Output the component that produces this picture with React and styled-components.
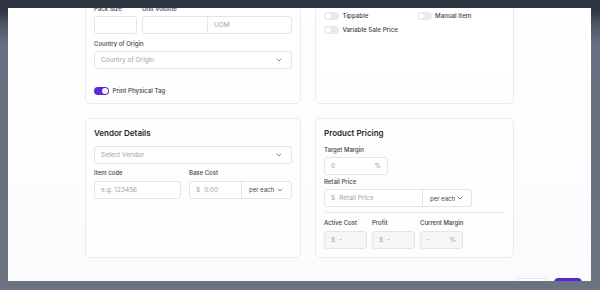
import { useLayoutEffect, useRef } from "react";
import styled, { createGlobalStyle } from "styled-components";
import { ChevronDown } from "lucide-react";

const GlobalStyle = createGlobalStyle`
  * { box-sizing: border-box; }
  html, body { margin: 0; height: 100%; }
  body {
    font-family: Inter, "Noto Sans", sans-serif;
    overflow: hidden;
    -webkit-font-smoothing: antialiased;
  }
`;

function Select({ placeholder }) {
  return (
    <SelectBox>
      <span>{placeholder}</span>
      <ChevronDown size={8} strokeWidth={2} color="#52525b" />
    </SelectBox>
  );
}

function Toggle({ on, label }) {
  return (
    <ToggleRow>
      <Track $on={on} />
      {label}
    </ToggleRow>
  );
}

function PerEach() {
  return (
    <UnitSegment>
      per each
      <ChevronDown size={8} strokeWidth={2} color="#3f3f46" />
    </UnitSegment>
  );
}

export default function App() {
  const modalRef = useRef(null);
  const anchorRef = useRef(null);

  // the form is shown scrolled part way down
  useLayoutEffect(() => {
    const modal = modalRef.current;
    const anchor = anchorRef.current;
    modal.scrollTop += anchor.getBoundingClientRect().top - 16;
  }, []);

  return (
    <>
      <GlobalStyle />
      <Overlay>
        <Modal ref={modalRef}>
          <Content>
            <Card>
              <CardTitle>Product Details</CardTitle>
              <Stack $gap={5.4}>
                <Field>
                  <Label>Product Name</Label>
                  <InputBox>Enter product name</InputBox>
                </Field>
                <PackRow>
                  <Field>
                    <Label>Pack Size</Label>
                    <InputBox ref={anchorRef} />
                  </Field>
                  <Field>
                    <Label>Unit Volume</Label>
                    <Group>
                      <Segment $width={64} />
                      <Segment $divided>UOM</Segment>
                    </Group>
                  </Field>
                </PackRow>
                <Field>
                  <Label>Country of Origin</Label>
                  <Select placeholder="Country of Origin" />
                </Field>
                <TagToggle>
                  <Toggle on label="Print Physical Tag" />
                </TagToggle>
              </Stack>
            </Card>

            <Card>
              <CardTitle>Product Settings</CardTitle>
              <Hint>Configure how this product behaves at checkout.</Hint>
              <ToggleGrid>
                <Toggle label="Taxable" />
                <Toggle label="Age Restricted" />
                <Toggle label="Track Inventory" />
                <Toggle label="Discountable" />
                <Toggle label="Tippable" />
                <Toggle label="Manual Item" />
                <Toggle label="Variable Sale Price" />
              </ToggleGrid>
            </Card>

            <Card>
              <CardTitle>Vendor Details</CardTitle>
              <Stack $gap={5.7}>
                <Select placeholder="Select Vendor" />
                <VendorRow>
                  <Field>
                    <Label>Item code</Label>
                    <InputBox>e.g. 123456</InputBox>
                  </Field>
                  <Field>
                    <Label>Base Cost</Label>
                    <Group>
                      <Segment $width={51}>
                        <Currency>$</Currency>0.00
                      </Segment>
                      <PerEach />
                    </Group>
                  </Field>
                </VendorRow>
              </Stack>
            </Card>

            <Card>
              <CardTitle>Product Pricing</CardTitle>
              <Stack $gap={2.4}>
                <Field>
                  <Label>Target Margin</Label>
                  <InputBox $width={64} $split>
                    <span>0</span>
                    <span>%</span>
                  </InputBox>
                </Field>
                <Field>
                  <Label>Retail Price</Label>
                  <Group $width={148}>
                    <Segment $width={97}>
                      <Currency>$</Currency>Retail Price
                    </Segment>
                    <PerEach />
                  </Group>
                </Field>
              </Stack>
              <Rule />
              <CostGrid>
                <Field>
                  <Label>Active Cost</Label>
                  <InputBox $disabled>
                    <Currency>$</Currency>-
                  </InputBox>
                </Field>
                <Field>
                  <Label>Profit</Label>
                  <InputBox $disabled>
                    <Currency>$</Currency>-
                  </InputBox>
                </Field>
                <Field>
                  <Label>Current Margin</Label>
                  <InputBox $disabled $split>
                    <span>-</span>
                    <span>%</span>
                  </InputBox>
                </Field>
              </CostGrid>
            </Card>
          </Content>

          <Footer>
            <Button $width={33}>Cancel</Button>
            <Button $width={28} $primary>
              Save
            </Button>
          </Footer>
        </Modal>
      </Overlay>
    </>
  );
}

const Overlay = styled.div`
  width: 600px;
  height: 290px;
  padding: 8px 9px 9px 8px;
  background: linear-gradient(
    to bottom,
    #2b3240 0px,
    #2e3543 10px,
    #4d5563 24px,
    #677080 44px,
    #6b7280 100%
  );
`;

const Modal = styled.div`
  width: 583px;
  height: 273px;
  background: linear-gradient(to bottom, #ffffff, #fbfafd);
  overflow-y: auto;
  scrollbar-width: none;
  &::-webkit-scrollbar {
    display: none;
  }
`;

const Content = styled.div`
  width: 429px;
  margin: 0 auto;
  padding-top: 12px;
  display: grid;
  grid-template-columns: 216px 199px;
  gap: 14px;
`;

const Card = styled.section`
  border: 1px solid #ebebef;
  border-radius: 5px;
  padding: 9px 8px 8px;
  background: rgba(255, 255, 255, 0.6);
  display: flex;
  flex-direction: column;
`;

const CardTitle = styled.h3`
  margin: 0 0 8px;
  font-size: 8px;
  line-height: 10px;
  font-weight: 600;
  color: #27272a;
`;

const Hint = styled.p`
  margin: 0 0 7px;
  font-size: 6px;
  line-height: 8px;
  color: #8a8a94;
`;

const Stack = styled.div`
  display: flex;
  flex-direction: column;
  gap: ${(p) => p.$gap}px;
`;

const Field = styled.div`
  display: flex;
  flex-direction: column;
  min-width: 0;
`;

const Label = styled.label`
  font-size: 6px;
  line-height: 8px;
  font-weight: 500;
  color: #3f3f46;
  margin-bottom: 3.5px;
  white-space: nowrap;
`;

const InputBox = styled.div`
  height: 18px;
  width: ${(p) => (p.$width ? `${p.$width}px` : "auto")};
  border: 1px solid #e4e4e9;
  border-radius: 3px;
  background: ${(p) => (p.$disabled ? "#f6f6f8" : "#fff")};
  display: flex;
  align-items: center;
  justify-content: ${(p) => (p.$split ? "space-between" : "flex-start")};
  padding: 0 6px;
  font-size: 6.5px;
  color: #a1a1aa;
  white-space: nowrap;
`;

const SelectBox = styled(InputBox)`
  justify-content: space-between;
  padding: 0 8px 0 6px;
`;

const Group = styled.div`
  height: 18px;
  width: ${(p) => (p.$width ? `${p.$width}px` : "auto")};
  border: 1px solid #e4e4e9;
  border-radius: 3px;
  background: #fff;
  display: flex;
`;

const Segment = styled.div`
  flex: ${(p) => (p.$width ? `0 0 ${p.$width}px` : "1")};
  display: flex;
  align-items: center;
  padding: 0 6px;
  font-size: 6.5px;
  color: #a1a1aa;
  white-space: nowrap;
  border-left: ${(p) => (p.$divided ? "1px solid #e4e4e9" : "none")};
`;

const UnitSegment = styled.div`
  flex: 1;
  display: flex;
  align-items: center;
  justify-content: space-between;
  padding: 0 7px 0 7px;
  border-left: 1px solid #e4e4e9;
  font-size: 6px;
  font-weight: 400;
  color: #3f3f46;
  white-space: nowrap;
`;

const Currency = styled.span`
  margin-right: 4px;
  color: #a1a1aa;
`;

const PackRow = styled.div`
  display: grid;
  grid-template-columns: 43px 1fr;
  gap: 5px;
`;

const VendorRow = styled.div`
  display: grid;
  grid-template-columns: 87px 1fr;
  gap: 8px;
`;

const TagToggle = styled.div`
  margin-top: 12px;
`;

const ToggleGrid = styled.div`
  display: grid;
  grid-template-columns: 1fr 1fr;
  column-gap: 4px;
  row-gap: 5.7px;
`;

const ToggleRow = styled.div`
  display: flex;
  align-items: center;
  gap: 3.5px;
  font-size: 6.2px;
  line-height: 8px;
  font-weight: 500;
  color: #3f3f46;
  white-space: nowrap;
`;

const Track = styled.span`
  position: relative;
  flex: 0 0 15px;
  height: 8px;
  border-radius: 4px;
  background: ${(p) => (p.$on ? "#5b2be0" : "#e9e9ee")};
  &::after {
    content: "";
    position: absolute;
    top: 1px;
    left: ${(p) => (p.$on ? "8px" : "1px")};
    width: 6px;
    height: 6px;
    border-radius: 50%;
    background: #fff;
    box-shadow: 0 0 1px rgba(0, 0, 0, 0.15);
  }
`;

const Rule = styled.hr`
  border: 0;
  border-top: 1px solid #e9e9ee;
  margin: 5px 0 6px;
`;

const CostGrid = styled.div`
  display: grid;
  grid-template-columns: repeat(3, 43px);
  column-gap: 5px;
`;

const Footer = styled.div`
  display: flex;
  justify-content: flex-end;
  gap: 6px;
  padding: 20px 9px 9px;
`;

const Button = styled.button`
  width: ${(p) => p.$width}px;
  height: 18px;
  border-radius: 4px;
  border: 1px solid ${(p) => (p.$primary ? "#5227d9" : "#e4e4e9")};
  background: ${(p) => (p.$primary ? "#5227d9" : "#fff")};
  color: ${(p) => (p.$primary ? "#fff" : "#3f3f46")};
  font-family: inherit;
  font-size: 6.5px;
  font-weight: 500;
  padding: 0;
`;
